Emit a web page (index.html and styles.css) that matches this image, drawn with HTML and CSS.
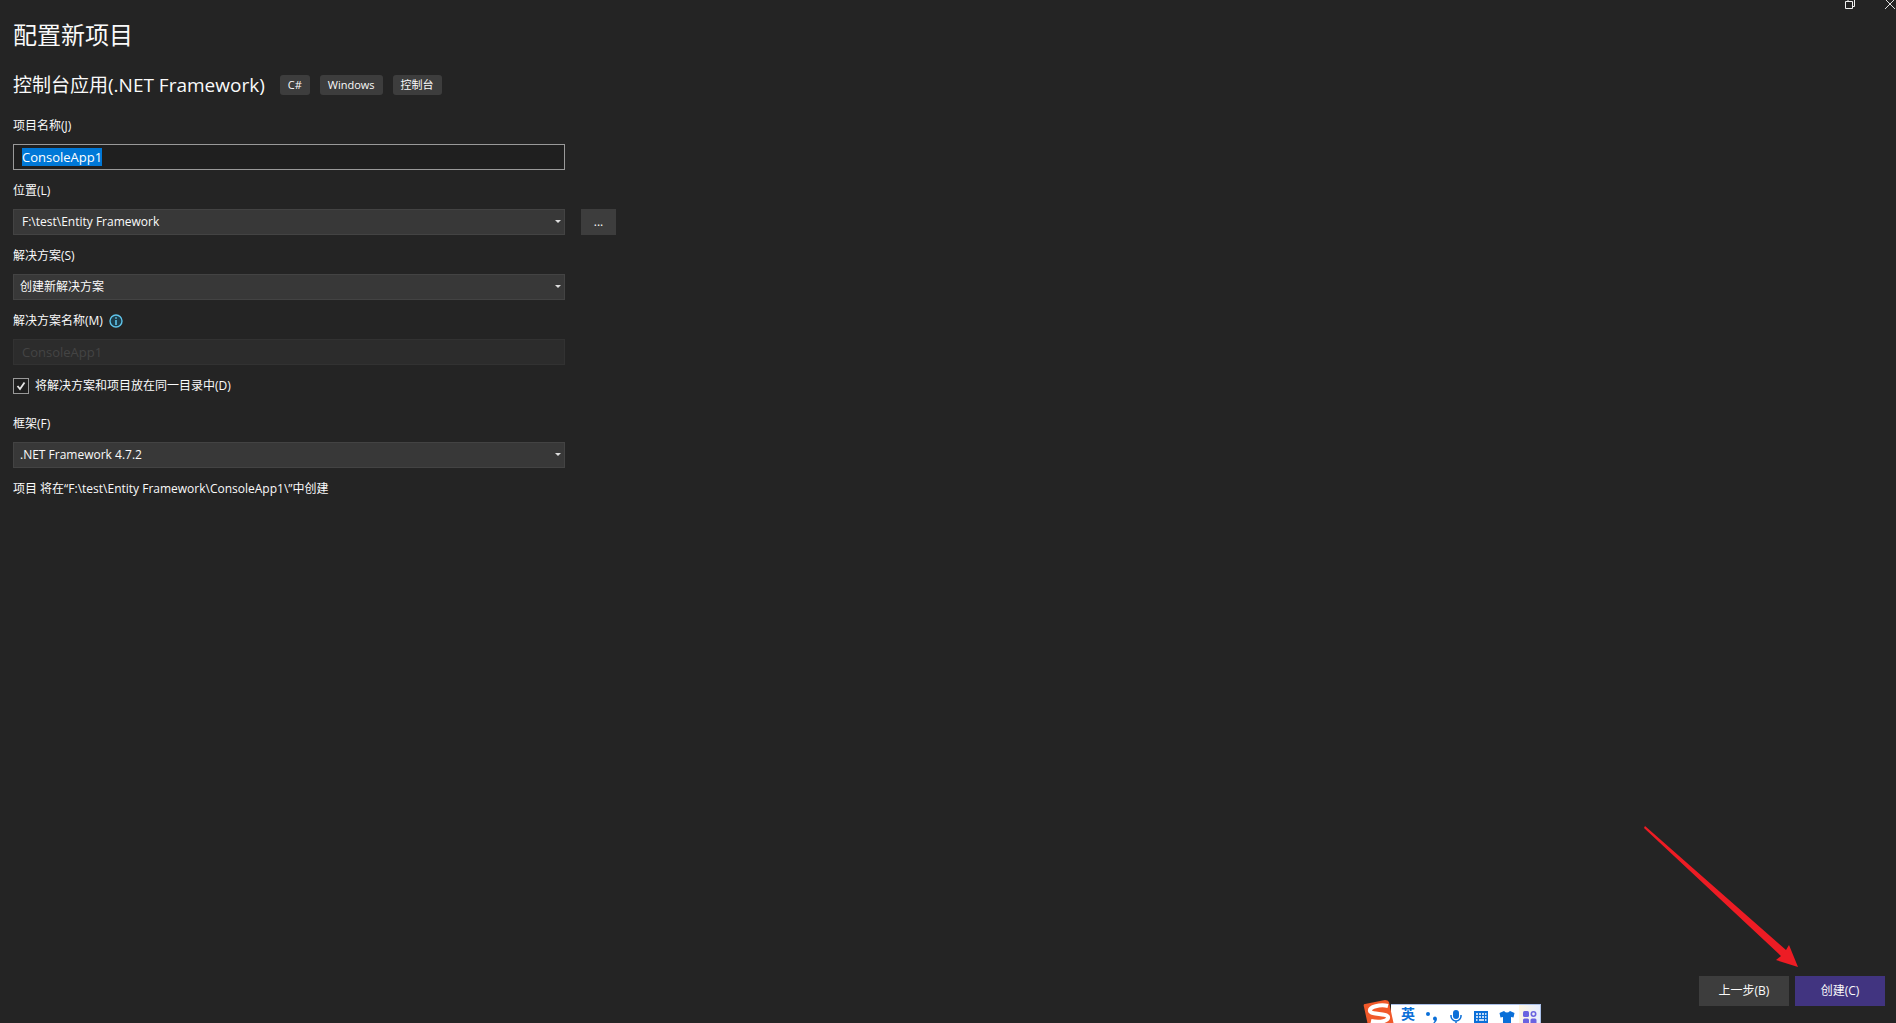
FILE: index.html
```
<!DOCTYPE html>
<html lang="zh-CN">
<head>
<meta charset="utf-8">
<title>配置新项目</title>
<link rel="stylesheet" href="styles.css">
</head>
<body>
<div class="window">
  <div class="window-controls">
    <button class="window-button" type="button" aria-label="还原">
      <svg width="10" height="10" viewBox="0 0 10 10" fill="none" stroke="#f0f0f0"><path d="M.5 1.500h7v7h-7zM3 1V-.5h6.500v7H8"/></svg>
    </button>
    <button class="window-button" type="button" aria-label="关闭">
      <svg width="10" height="10" viewBox="0 0 10 10" fill="none" stroke="#e0e0e0"><path d="M0-1l10 10M10-1L0 9"/></svg>
    </button>
  </div>

  <form class="form">
    <h1 class="title">配置新项目</h1>
    <div class="template">
      <h2 class="template-name">控制台应用(.NET Framework)</h2>
      <ul class="tags">
        <li class="tag">C#</li>
        <li class="tag">Windows</li>
        <li class="tag">控制台</li>
      </ul>
    </div>

    <div class="field">
      <label class="label" for="project">项目名称(J)</label>
      <input class="control text-input" id="project" type="text" value="ConsoleApp1" spellcheck="false" autocomplete="off">
    </div>

    <div class="field">
      <label class="label" for="location">位置(L)</label>
      <div class="location-row">
        <div class="combo">
          <select class="control select editable" id="location"><option>F:\test\Entity Framework</option></select>
          <svg class="caret" width="6" height="3" viewBox="0 0 6 3"><path d="M0 0h6L3 3z" fill="#dedede"/></svg>
        </div>
        <button class="browse" type="button" aria-label="浏览">...</button>
      </div>
    </div>

    <div class="field">
      <label class="label" for="solution">解决方案(S)</label>
      <div class="combo">
        <select class="control select" id="solution"><option>创建新解决方案</option></select>
        <svg class="caret" width="6" height="3" viewBox="0 0 6 3"><path d="M0 0h6L3 3z" fill="#dedede"/></svg>
      </div>
    </div>

    <div class="field">
      <div class="label-row">
        <label class="label" for="solution-name">解决方案名称(M)</label>
        <svg width="14" height="14" viewBox="0 0 14 14"><circle cx="7" cy="7" r="6" fill="#1d3c49" stroke="#5fc4ea" stroke-width="1.400"/><path d="M6.200 3.200h1.600v1.600H6.200zM6.200 6h1.600v5H6.200z" fill="#5fc4ea"/></svg>
      </div>
      <input class="control text-input" id="solution-name" type="text" value="ConsoleApp1" disabled>
    </div>

    <label class="check-row">
      <span class="check">
        <input class="check-box" type="checkbox" checked>
        <svg class="check-mark" width="16" height="16" viewBox="0 0 16 16"><path d="M4.500 8l2.500 3 4.500-6.500" fill="none" stroke="#e6e6e6" stroke-width="1.800"/></svg>
      </span>
      将解决方案和项目放在同一目录中(D)
    </label>

    <div class="field">
      <label class="label" for="framework">框架(F)</label>
      <div class="combo">
        <select class="control select" id="framework"><option>.NET Framework 4.7.2</option></select>
        <svg class="caret" width="6" height="3" viewBox="0 0 6 3"><path d="M0 0h6L3 3z" fill="#dedede"/></svg>
      </div>
    </div>

    <p class="summary">项目 将在“F:\test\Entity Framework\ConsoleApp1\”中创建</p>
  </form>

  <footer class="actions">
    <button class="button" type="button">上一步(B)</button>
    <button class="button primary" type="button">创建(C)</button>
  </footer>

  <svg class="pointer-arrow" width="156" height="144" viewBox="0 0 156 144"><path d="M0 2L1 0 142 124 145 119 154 141 132 134 137 130z" fill="#ed1c24"/></svg>

  <div class="ime">
    <svg class="ime-logo" width="32" height="24" viewBox="0 0 32 24">
      <path d="M2 5Q0 5 1 8l5 23h26L26 3Q25 1 22 1z" fill="#f1592a"/>
      <path d="M25 7C17 5 6 8 7 12s17 2 18 6-8 6-17 4" fill="none" stroke="#fff" stroke-width="4"/>
    </svg>
    <span class="ime-mode">英</span>
    <svg class="ime-icon" width="14" height="14" viewBox="0 0 14 14" fill="#0a6fd8"><circle cx="3" cy="4" r="2"/><path d="M8 8.500q0-2 2-2t2 2.500-3.500 5l-.5-1q1.500-1 1.500-2.500-1.500 0-1.500-2z"/></svg>
    <svg class="ime-icon" width="14" height="16" viewBox="0 0 14 16" fill="#0a6fd8"><rect x="4" y="0" width="6" height="9" rx="3"/><path d="M2 5v1a5 5 0 0 0 10 0V5M7 11v2" fill="none" stroke="#0a6fd8" stroke-width="1.500"/></svg>
    <svg class="ime-icon" width="16" height="13" viewBox="0 0 16 13"><path fill="#0a6fd8" fill-rule="evenodd" d="M1 1h14v12H1zM3 3h10v8H3z"/><path fill="#0a6fd8" d="M1 1h14v12H1z"/><path d="M3 4h2M6 4h2M9 4h2M12 4h1.500M3 7h2M6 7h2M9 7h2M12 7h1.500M3 10h1.500M6 10h5M12 10h1.500" stroke="#fff" stroke-width="1.500"/></svg>
    <svg class="ime-icon" width="16" height="14" viewBox="0 0 16 14"><path d="M5 1q3 3 6 0l4.500 2-1 4.500L12 7v7H4V7l-2.500.5L.5 3z" fill="#0a6fd8"/></svg>
    <span class="ime-tools"><svg width="14" height="13" viewBox="0 0 14 13" fill="#6a63e0"><rect width="6" height="6" rx="1.500"/><circle cx="10.500" cy="3" r="2.200" fill="none" stroke="#6a63e0" stroke-width="1.600"/><rect y="7.500" width="6" height="5.500" rx="1.500"/><rect x="7.500" y="7.500" width="6" height="5.500" rx="1.500"/></svg></span>
  </div>
</div>
<script src="main.js"></script>
</body>
</html>
```
FILE: styles.css
```
* { box-sizing: border-box; }

body {
  margin: 0;
  background: #242424;
  color: #fafafa;
  font: 12px/18px "Open Sans", "Noto Sans CJK SC", sans-serif;
}

button, input, select { font: inherit; color: inherit; margin: 0; }

.window {
  position: relative;
  display: flex;
  flex-direction: column;
  min-height: 100vh;
  padding: 16px 11px 17px 13px;
  overflow: hidden;
}

.window-controls {
  position: absolute;
  top: 0;
  right: 1px;
  display: flex;
  gap: 30px;
}

.window-button {
  display: flex;
  width: 10px;
  height: 10px;
  padding: 0;
  border: 0;
  background: none;
}

.form { display: flex; flex-direction: column; }

.title { margin: 0; font-size: 24px; line-height: 38px; font-weight: 400; }

.template { display: flex; align-items: center; gap: 15px; margin: 16px 0 17px; }

.template-name { margin: 0; font-size: 19px; line-height: 30px; font-weight: 400; }

.tags { display: flex; gap: 10px; margin: 0; padding: 0; list-style: none; }

.tag { padding: 1px 8px; border-radius: 3px; background: #3d3d3d; font-size: 11px; }

.field { max-width: 552px; margin-bottom: 12px; }

.label { display: block; }

.label-row { display: flex; align-items: center; gap: 6px; }

.control {
  display: block;
  width: 100%;
  height: 26px;
  margin-top: 9px;
  border: 1px solid #434343;
  border-radius: 0;
  outline: 0;
  background: #383838;
}

.text-input { padding: 0 8px; border-color: #999; background: #1f1f1f; font-size: 13px; }
.text-input:disabled { border-color: #323232; background: #2c2c2c; color: #444; }
.text-input::selection { background: #0078d7; color: #fff; }

.select { appearance: none; padding: 0 18px 0 6px; }
.select.editable { padding-left: 8px; }

.combo { position: relative; flex: 0 0 100%; }

.caret { position: absolute; right: 4px; bottom: 12px; pointer-events: none; }

.location-row { display: flex; align-items: flex-end; gap: 16px; }

.browse { flex: none; width: 35px; height: 26px; padding: 0; border: 0; background: #3d3d3d; }

.check-row { display: flex; align-items: center; gap: 6px; align-self: flex-start; margin: 0 0 20px; }

.check { position: relative; display: flex; }

.check-box { appearance: none; width: 16px; height: 16px; border: 1px solid #999; background: #1f1f1f; }

.check-mark { position: absolute; inset: 0; visibility: hidden; pointer-events: none; }
.check-box:checked + .check-mark { visibility: visible; }

.summary { margin: 0; }

.actions { display: flex; justify-content: flex-end; gap: 6px; margin-top: auto; }

.button { width: 90px; height: 30px; padding: 0; border: 0; background: #3d3d3d; }
.button.primary { background: #413480; }

.pointer-arrow { position: absolute; right: 96px; bottom: 53px; pointer-events: none; }

.ime {
  position: absolute;
  right: 355px;
  bottom: 0;
  display: flex;
  align-items: flex-start;
  gap: 10px;
  width: 150px;
  height: 19px;
  border-top: 1px solid #a9bfe8;
  border-right: 1px solid #a9bfe8;
  background: #fff;
}

.ime-logo { position: absolute; right: 145px; bottom: 0; }

.ime-mode { width: 14px; margin-left: 10px; color: #0a6fd8; font-size: 14px; font-weight: 700; line-height: 18px; }

.ime-icon { flex: none; margin-top: 5px; }

.ime-tools { height: 18px; padding: 6px 4px 0; margin-left: -6px; background: linear-gradient(90deg, #fff6e2, #e6edff); overflow: hidden; }
```
FILE: main.js
```
const project = document.getElementById("project");
project.focus();
project.select();
```
